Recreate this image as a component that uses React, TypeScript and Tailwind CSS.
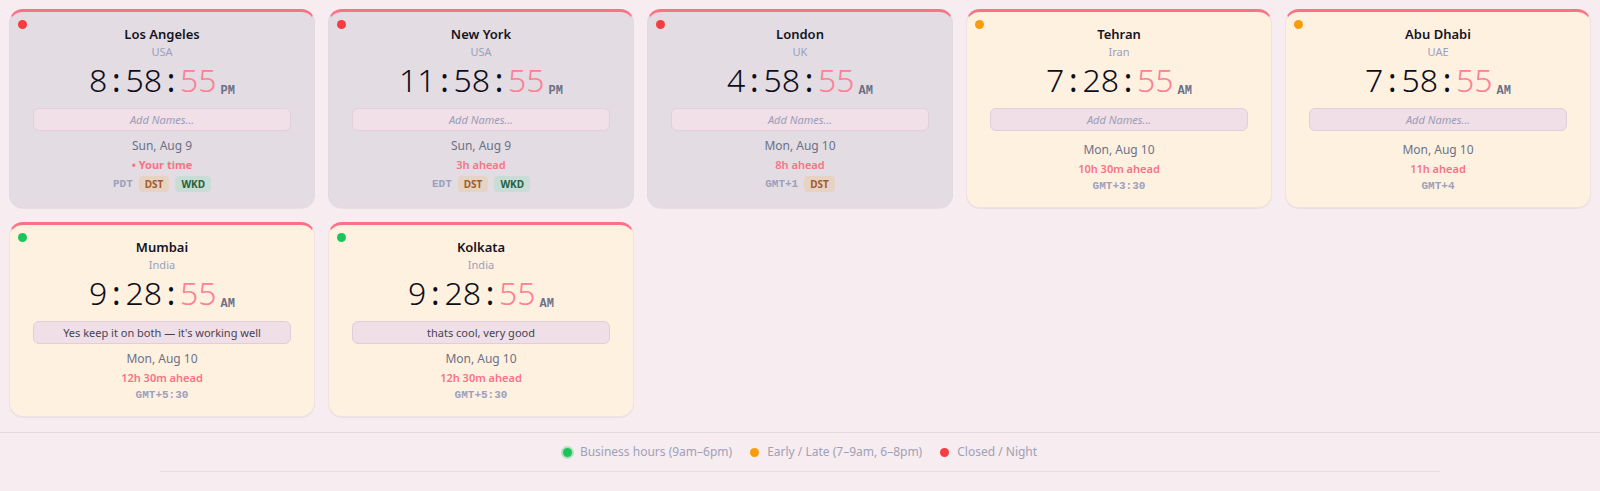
import { useState } from "react";
import clsx from "clsx";

type Status = "open" | "edge" | "closed";

interface City {
  name: string;
  country: string;
  hour: string;
  minute: string;
  second: string;
  period: "AM" | "PM";
  date: string;
  offset: string;
  zone: string;
  status: Status;
  isLocal?: boolean;
  dst?: boolean;
  weekend?: boolean;
  note?: string;
}

const CITIES: City[] = [
  { name: "Los Angeles", country: "USA", hour: "8", minute: "58", second: "55", period: "PM", date: "Sun, Aug 9", offset: "• Your time", zone: "PDT", status: "closed", isLocal: true, dst: true, weekend: true },
  { name: "New York", country: "USA", hour: "11", minute: "58", second: "55", period: "PM", date: "Sun, Aug 9", offset: "3h ahead", zone: "EDT", status: "closed", dst: true, weekend: true },
  { name: "London", country: "UK", hour: "4", minute: "58", second: "55", period: "AM", date: "Mon, Aug 10", offset: "8h ahead", zone: "GMT+1", status: "closed", dst: true },
  { name: "Tehran", country: "Iran", hour: "7", minute: "28", second: "55", period: "AM", date: "Mon, Aug 10", offset: "10h 30m ahead", zone: "GMT+3:30", status: "edge" },
  { name: "Abu Dhabi", country: "UAE", hour: "7", minute: "58", second: "55", period: "AM", date: "Mon, Aug 10", offset: "11h ahead", zone: "GMT+4", status: "edge" },
  { name: "Mumbai", country: "India", hour: "9", minute: "28", second: "55", period: "AM", date: "Mon, Aug 10", offset: "12h 30m ahead", zone: "GMT+5:30", status: "open", note: "Yes keep it on both — it's working well" },
  { name: "Kolkata", country: "India", hour: "9", minute: "28", second: "55", period: "AM", date: "Mon, Aug 10", offset: "12h 30m ahead", zone: "GMT+5:30", status: "open", note: "thats cool, very good" },
];

const LEGEND: { status: Status; label: string }[] = [
  { status: "open", label: "Business hours (9am–6pm)" },
  { status: "edge", label: "Early / Late (7–9am, 6–8pm)" },
  { status: "closed", label: "Closed / Night" },
];

const DOT: Record<Status, string> = {
  open: "bg-[#1bc55c]",
  edge: "bg-[#f99c0b]",
  closed: "bg-[#f63c40]",
};

function Colon() {
  return <span className="inline-block w-[18px] text-center font-normal">:</span>;
}

function CityCard({ city }: { city: City }) {
  const [note, setNote] = useState(city.note ?? "");
  const night = city.status === "closed";

  return (
    <article
      className={clsx(
        "relative flex flex-col items-center rounded-[14px] border border-t-3 px-[23px] pt-[13px] pb-[15px] text-center shadow-2xs",
        night ? "border-[#e2d9e1] bg-[#e3dce3]" : "border-[#f0e2e2] bg-[#fff1e0]",
        "border-t-[#fb7185]",
      )}
    >
      <span className={clsx("absolute top-2 left-2 size-[9px] rounded-full", DOT[city.status])} />
      <h2 className="text-[13px] leading-[19px] font-semibold text-[#14141f]">{city.name}</h2>
      <p className="text-[11px] leading-[15px] text-[#9aa0bd]">{city.country}</p>

      <div className="mt-[3px] flex items-end text-[32px] leading-9 font-light text-[#0d0d18]">
        <span>{city.hour}</span>
        <Colon />
        <span>{city.minute}</span>
        <Colon />
        <span className="text-[#fd8095]">{city.second}</span>
        <span className="ml-1 font-['Liberation_Mono',monospace] text-xs leading-[14px] font-bold text-[#6a7086]">
          {city.period}
        </span>
      </div>

      <input
        type="text"
        aria-label={`Names for ${city.name}`}
        placeholder="Add Names..."
        value={note}
        onChange={(e) => setNote(e.target.value)}
        className={clsx(
          "mt-[10px] h-[23px] w-full rounded-md border px-2 text-center text-[11px] text-[#444456] placeholder:text-[#999dba] placeholder:italic focus:outline-none",
          night ? "border-[#e3cfd8] bg-[#f1e0e7]" : "border-[#dfcfdb] bg-[#f0dfe6]",
        )}
      />

      <div className="mt-auto flex flex-col items-center pt-[5px]">
        <p className="text-xs leading-5 text-[#6b7186]">{city.date}</p>
        <p className={clsx("text-[11px] leading-[18px] text-[#fb7185]", city.isLocal ? "font-bold" : "font-semibold")}>
          {city.offset}
        </p>
        <div className="mt-[2px] flex items-center gap-1.5 text-[10px] leading-[14px] font-bold">
          <span className="font-['Liberation_Mono',monospace] text-[11px] leading-3 text-[#9ba0bd]">{city.zone}</span>
          {city.dst && <span className="rounded-sm bg-[#e6d3c3] px-1.5 py-px text-[#a35a2b]">DST</span>}
          {city.weekend && <span className="rounded-sm bg-[#c9dcd5] px-1.5 py-px text-[#23613f]">WKD</span>}
        </div>
      </div>
    </article>
  );
}

export default function App() {
  return (
    <main className="min-h-screen bg-[#f7ecf0] pt-[9px] font-['Noto_Sans',sans-serif]">
      <section className="grid grid-cols-5 gap-x-[13px] gap-y-[14px] px-[9px]">
        {CITIES.map((city) => (
          <CityCard key={city.name} city={city} />
        ))}
      </section>

      {/* Legend */}
      <footer className="mt-[15px] border-t border-[#e5d8df]">
        <ul className="mx-auto flex w-4/5 justify-center gap-[18px] border-b border-[#eadfe5] py-[9px]">
          {LEGEND.map((item) => (
            <li key={item.status} className="flex items-center gap-2 text-xs leading-5 text-[#9ea1b8]">
              <span
                className={clsx(
                  "size-[9px] rounded-full",
                  DOT[item.status],
                  item.status === "open" && "ring-2 ring-[#1bc55c]/30",
                )}
              />
              {item.label}
            </li>
          ))}
        </ul>
      </footer>
    </main>
  );
}
